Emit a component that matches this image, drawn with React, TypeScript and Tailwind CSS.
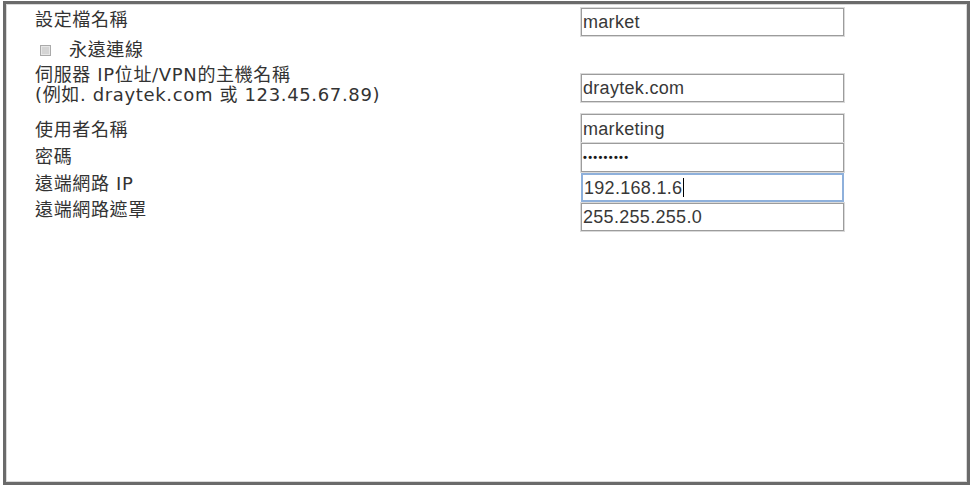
import React from "react";

const labelFont = {fontFamily: '"DejaVu Sans", "Noto Sans CJK TC", sans-serif'};
const inputFont = {fontFamily: '"Liberation Sans", Arial, "Noto Sans CJK TC", sans-serif'};

interface FieldProps {
    value?: string;
    className?: string;
    focused?: boolean;
    password?: boolean;
}

const Field = ({value = "", className = "", focused = false, password = false}: FieldProps) => {
    return (
        <div
            className={`flex w-[263px] items-center bg-white pl-[1px] text-[18px] tracking-[0.3px] text-[#383838] ${
                focused
                    ? "border-2 border-[#8eb0db]"
                    : "border border-[#9c9c9c] shadow-[0_0_0_1px_#dadada]"
            } ${className}`}
            style={inputFont}
        >
            {password ? (
                <span className="text-[11px] font-bold leading-none tracking-[1.3px] text-[#1a1a1a]">
                    {"•••••••••"}
                </span>
            ) : (
                <span className="leading-none">{value}</span>
            )}
            {focused && <span className="ml-[1px] h-[19px] w-[1px] bg-black" />}
        </div>
    );
};

export default function App() {
    return (
        <div className="h-[487px] w-[971px] overflow-hidden bg-white">
            <div className="ml-[3px] mt-[1px] flex h-[484px] w-[967px] border-[3px] border-[#6a6a6a] shadow-[inset_1px_1px_0_#d9d9d9,inset_-1px_-1px_0_#d9d9d9]">
                {/* labels */}
                <div
                    className="flex w-[575px] flex-col pl-[29px] text-[18px] leading-[20px] tracking-[0.65px] text-[#333]"
                    style={labelFont}
                >
                    <p className="mt-[6px]">設定檔名稱</p>
                    <div className="mt-[10px] flex h-[20px] items-center">
                        <span className="ml-[5px] h-[11px] w-[11px] border border-[#aaaaaa] bg-[#d4d4d4] shadow-[inset_0_0_0_1px_#e6e6e6]" />
                        <span className="ml-[18px]">永遠連線</span>
                    </div>
                    <p className="mt-[5px]">伺服器 IP位址/VPN的主機名稱</p>
                    <p>(例如. draytek.com 或 123.45.67.89)</p>
                    <p className="mt-[15px]">使用者名稱</p>
                    <p className="mt-[7px]">密碼</p>
                    <p className="mt-[7px]">遠端網路 IP</p>
                    <p className="mt-[6px]">遠端網路遮罩</p>
                </div>

                {/* inputs */}
                <div className="flex flex-col">
                    <Field value="market" className="mt-[4px] h-[28px]" />
                    <Field value="draytek.com" className="mt-[38px] h-[28px]" />
                    <Field value="marketing" className="mt-[12px] h-[29px]" />
                    <Field password className="h-[29px]" />
                    <Field value="192.168.1.6" focused className="mt-[1px] h-[29px]" />
                    <Field value="255.255.255.0" className="mt-[1px] h-[28px]" />
                </div>
            </div>
        </div>
    );
}
